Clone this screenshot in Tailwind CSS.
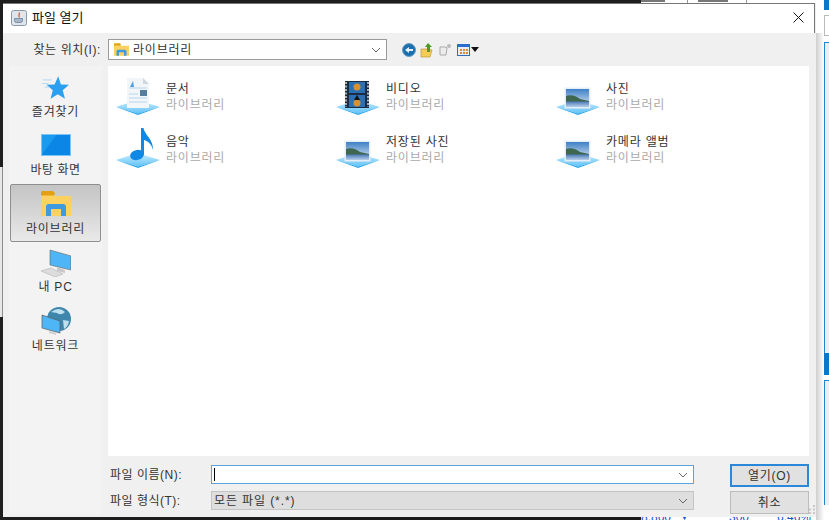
<!DOCTYPE html>
<html><head><meta charset="utf-8"><script src="https://cdn.jsdelivr.net/npm/@tailwindcss/browser@4"></script></head>
<body class="bg-white overflow-hidden">
<svg width="0" height="0" class="absolute">
<defs>
<linearGradient id="pl" x1="0" y1="0" x2="0" y2="1"><stop offset="0" stop-color="#cdeefd"/><stop offset="1" stop-color="#62c3f7"/></linearGradient>
<linearGradient id="sky" x1="0" y1="0" x2="0" y2="1"><stop offset="0" stop-color="#3f80c6"/><stop offset="1" stop-color="#dfeaf2"/></linearGradient>
<linearGradient id="water" x1="0" y1="0" x2="0" y2="1"><stop offset="0" stop-color="#4a79b8"/><stop offset="1" stop-color="#b7cfe8"/></linearGradient>
<symbol id="plate" viewBox="0 0 44 40" overflow="visible"><path d="M21 25 44 32 22 38.500 0 32Z" fill="url(#pl)"/><path d="M0 32 22 38.500 44 32 22 40Z" fill="#2aa5ef"/></symbol>
<symbol id="photo" viewBox="0 0 44 40"><use href="#plate" width="44" height="40"/><rect x="8.500" y="12.500" width="26" height="21" fill="#e4eef7"/><rect x="10" y="14" width="23" height="18" fill="url(#sky)"/><path d="M10 21C15 19 20 21 24 24L33 26V28H10Z" fill="#3f664f"/><rect x="10" y="26.500" width="23" height="5.500" fill="url(#water)"/></symbol>
<symbol id="folder" viewBox="0 0 30 25"><path d="M0 3h11l3 2h16v20H0Z" fill="#fbd25f"/><path d="M1 0h11l2 2.500-1 2H0V1Z" fill="#e2a20f"/><path d="M5 25V16q0-3 3-3h14q3 0 3 3v9h-5v-7H10v7Z" fill="#3f9adf"/></symbol>
</defs>
</svg>
<div class="relative w-[829px] h-[520px] overflow-hidden bg-[#1e1e1e] font-['Liberation_Sans','Noto_Sans_CJK_KR',sans-serif]">
  <!-- background peeking around the dialog -->
  <div class="absolute left-[641px] top-0 w-[188px] h-[3px] bg-white flex">
    <div class="w-[24px] h-[2px] bg-[#777]"></div><div class="ml-[22px] w-px h-[3px] bg-[#999]"></div><div class="ml-[10px] w-[30px] h-[2px] bg-[#777]"></div><div class="ml-[18px] w-px h-[3px] bg-[#999]"></div>
  </div>
  <div class="absolute left-[816px] top-0 w-[13px] h-[520px] bg-white flex">
    <div class="w-[8px] h-full bg-linear-to-r from-[#cfcfcf] to-white mt-[33px]"></div>
    <div class="w-[5px] h-full flex flex-col">
      <div class="h-[10px] bg-[#0a78c8]"></div>
      <div class="mt-[5px] h-[21px] border border-[#bbb] border-r-0"></div>
      <div class="mt-[6px] h-[311px] border-l border-t border-[#1f86d0] bg-[#e8eff6]"></div>
      <div class="h-[22px] bg-[#0a78c8]"></div>
      <div class="mt-[5px] h-[125px] border-l border-t border-[#1f86d0] bg-[#e8eff6]"></div>
    </div>
  </div>
  <div class="absolute left-[641px] top-[511px] w-[175px] h-[9px] bg-white overflow-hidden flex text-[12px] leading-[13px] text-[#1750c8]">
    <span>8.860</span><span class="ml-[9px] text-[9px]">▼</span><span class="ml-[40px]">300</span><span class="ml-[28px]">6.46%</span>
  </div>
  <div class="absolute left-0 top-[167px] w-[3px] h-[150px] bg-[#e6e6e6] border-r border-[#8a8a8a]"></div>

  <div class="absolute left-[3px] top-[3px] w-[813px] h-[514px] flex flex-col bg-[#f0f0f0] text-[#2a2a2a]">
    <div class="h-[30px] shrink-0 bg-white mr-[1px] flex items-center pl-[8px] pr-[10px] border-r border-t border-[#777] text-[13px] text-[#111]">
      <svg class="mb-[2px]" width="16" height="16" viewBox="0 0 16 16"><rect x=".5" y=".5" width="15" height="15" rx="2" fill="#dfe5ec" stroke="#8b98a8"/><path d="M8 2.500C9.500 4.500 6.500 5 8.500 7.500" fill="none" stroke="#c8552a" stroke-width="1.200"/><path d="M3.500 8.500h8v2q0 2-2 2h-4q-2 0-2-2Z" fill="#a9b7c8" stroke="#5c7894" stroke-width=".7"/></svg>
      <span class="ml-[5px] mb-[2px]">파일 열기</span>
      <svg class="ml-auto mb-[2px]" width="11" height="11" viewBox="0 0 11 11"><path d="M.5.5l10 10M10.500.5l-10 10" stroke="#111" stroke-width="1"/></svg>
    </div>
    <div class="flex-1 flex flex-col min-h-0">
      <div class="h-[33px] shrink-0 flex items-center">
        <span class="w-[105px] pr-[7px] text-right text-[12px] tracking-[0.6px] whitespace-nowrap text-[#333]">찾는 위치(I):</span>
        <div class="w-[279px] h-[21px] bg-white border border-[#9a9a9a] flex items-center pl-[5px] pr-[5px] text-[12px]">
          <svg width="15" height="13"><use href="#folder" width="15" height="13"/></svg>
          <span class="ml-[4px] tracking-[0.8px] text-[#333]">라이브러리</span>
          <svg class="ml-auto" width="10" height="6" viewBox="0 0 10 6"><path d="M1 1l4 4 4-4" fill="none" stroke="#666"/></svg>
        </div>
        <div class="ml-[15px] flex items-center">
          <svg width="14" height="14" viewBox="0 0 14 14"><circle cx="7" cy="7" r="6.500" fill="#1c6fae"/><circle cx="7" cy="7" r="6.500" fill="none" stroke="#6a9cc0"/><path d="M3 7l4-3v2h4v2H7v2Z" fill="#e8f2fa"/></svg>
          <svg class="ml-[4px]" width="13" height="16" viewBox="0 0 13 16"><path d="M1 7h5l6 1-2 7H1Z" fill="#f3cd55" stroke="#b98e22" stroke-width=".6"/><path d="M8 1l4 4H10v5H7V5H5Z" fill="#4c9a28"/></svg>
          <svg class="ml-[6px]" width="13" height="13" viewBox="0 0 13 13"><path d="M1 4h6l1 1-1 7H1Z" fill="#ececec" stroke="#aaa"/><circle cx="10" cy="3" r="2" fill="#bbb"/></svg>
          <svg class="ml-[5px]" width="14" height="12" viewBox="0 0 14 12"><rect x=".5" y=".5" width="12" height="11" fill="#e8eef5" stroke="#2c6fc2"/><rect x="1" y="1" width="11" height="2" fill="#2c6fc2"/><path d="M3 5h2v2H3Zm3 0h2v2H6Zm3 0h2v2H9ZM3 8h2v2H3Zm3 0h2v2H6Zm3 0h2v2H9Z" fill="#d88c3a"/></svg>
          <svg width="8" height="5" viewBox="0 0 8 5"><path d="M0 0h8L4 5Z" fill="#111"/></svg>
        </div>
      </div>
      <div class="flex-1 flex min-h-0 pl-[6px]">
        <div class="w-[93px] shrink-0 bg-[#f3f3f3] flex flex-col items-stretch text-[12px] text-center text-[#333] mb-[3px] pl-[1px] pr-[1px] pt-[2px]">
          <div class="h-[58px] flex flex-col items-center">
            <div class="h-[37px] pt-[8px]"><svg width="27" height="24" viewBox="0 0 30 26"><path d="M18 0l3 9 9 .5-7 6 2.500 9.500-8-5-8 5 2.500-9.500-7-6 9-.5Z" fill="#2b9ff0"/><path d="M1 4h10M0 8h7M3 12h5" stroke="#a9d8f8"/></svg></div>
            <span class="tracking-[0.8px] leading-[14px]">즐겨찾기</span>
          </div>
          <div class="h-[58px] flex flex-col items-center">
            <div class="h-[37px] pt-[8px]"><svg width="30" height="22" viewBox="0 0 30 22"><rect width="30" height="22" fill="#1a9bf0"/><path d="M0 22 16 0h14v22Z" fill="#0c86e6"/><rect x=".5" y=".5" width="29" height="21" fill="none" stroke="#7cc4f5"/></svg></div>
            <span class="tracking-[0.5px] leading-[14px]">바탕 화면</span>
          </div>
          <div class="h-[58px] flex flex-col items-center border border-[#8f8f8f] rounded-[2px] bg-linear-to-b from-[#c4c4c4] to-[#e9e9e9]">
            <div class="h-[37px] pt-[6px]"><svg width="30" height="25"><use href="#folder" width="30" height="25"/></svg></div>
            <span class="tracking-[0.8px] leading-[14px]">라이브러리</span>
          </div>
          <div class="h-[58px] flex flex-col items-center">
            <div class="h-[38px] pt-[7px]"><svg width="30" height="28" viewBox="0 0 30 28"><path d="M9 1l21 6v14L9 16Z" fill="#4eb6f7" stroke="#666" stroke-width=".6"/><path d="M16 18l8 3v3l-8-2Z" fill="#c9c9c9"/><path d="M0 22l10-3 12 6-8 3Z" fill="#dcdcdc" stroke="#aaa" stroke-width=".5"/></svg></div>
            <span class="tracking-[0.8px] leading-[14px]">내 PC</span>
          </div>
          <div class="h-[58px] flex flex-col items-center">
            <div class="h-[39px] pt-[6px]"><svg width="30" height="30" viewBox="0 0 30 30"><circle cx="18" cy="13" r="12" fill="#3f86ad"/><path d="M10 6q8-6 14 0-4 4-8 1ZM22 14l6 1q-1 6-5 8Z" fill="#bfe0ef"/><path d="M1 9l18 6v12L1 22Z" fill="#4eb6f7" stroke="#5a5a5a" stroke-width=".7"/><path d="M8 25l7 2v2l-7-2Z" fill="#cfcfcf"/></svg></div>
            <span class="tracking-[0.8px] leading-[14px]">네트워크</span>
          </div>
        </div>
        <div class="w-[701px] ml-[6px] flex flex-col">
          <div class="h-[390px] bg-white grid grid-cols-[220px_220px_220px] auto-rows-[53px] pt-[9px] pl-[8px] content-start text-[12px]">
            <div class="flex"><svg width="44" height="40" viewBox="0 0 44 40"><use href="#plate" width="44" height="40"/><path d="M11 3h16l6 6v24H11Z" fill="#f3f6f9"/><path d="M27 3l6 6h-6Z" fill="#cfd8e2"/><path d="M14 12l3-6 1 6Z" fill="#4d9fe0"/><path d="M13 13h18M13 19h9M13 23h18M13 27h18" stroke="#b5d6ef"/><rect x="24" y="15" width="7" height="6" fill="#557d9c"/></svg><div class="ml-[6px] mt-[6px] leading-[16px] tracking-[0.8px]"><div class="text-[#333]">문서</div><div class="text-[#a9a9a9]">라이브러리</div></div></div>
            <div class="flex"><svg width="44" height="40" viewBox="0 0 44 40"><use href="#plate" width="44" height="40"/><rect x="9" y="6" width="24" height="27" fill="#1c2c44"/><path d="M10 7v25M32 7v25" stroke="#a6b0ba" stroke-width="2" stroke-dasharray="2 1.500"/><rect x="13" y="7" width="16" height="11" fill="#2b6fb5"/><rect x="13" y="20" width="16" height="12" fill="#2b6fb5"/><circle cx="21" cy="12" r="3.500" fill="#d9912d"/><circle cx="21" cy="28" r="3.500" fill="#d9912d"/><path d="M21 20l3 5h-6Z" fill="#111"/></svg><div class="ml-[6px] mt-[6px] leading-[16px] tracking-[0.8px]"><div class="text-[#333]">비디오</div><div class="text-[#a9a9a9]">라이브러리</div></div></div>
            <div class="flex"><svg width="44" height="40"><use href="#photo" width="44" height="40"/></svg><div class="ml-[6px] mt-[6px] leading-[16px] tracking-[0.8px]"><div class="text-[#333]">사진</div><div class="text-[#a9a9a9]">라이브러리</div></div></div>
            <div class="flex"><svg width="44" height="40" viewBox="0 0 44 40"><use href="#plate" width="44" height="40"/><ellipse cx="21" cy="27" rx="7" ry="5" fill="#1088e6" transform="rotate(-15 21 27)"/><path d="M25 27V0h2.500c1 7 10 11 9.500 22-1.500-6-5-9-9-10v15Z" fill="#1088e6"/></svg><div class="ml-[6px] mt-[6px] leading-[16px] tracking-[0.8px]"><div class="text-[#333]">음악</div><div class="text-[#a9a9a9]">라이브러리</div></div></div>
            <div class="flex"><svg width="44" height="40"><use href="#photo" width="44" height="40"/></svg><div class="ml-[6px] mt-[6px] leading-[16px] tracking-[0.8px]"><div class="text-[#333]">저장된 사진</div><div class="text-[#a9a9a9]">라이브러리</div></div></div>
            <div class="flex"><svg width="44" height="40"><use href="#photo" width="44" height="40"/></svg><div class="ml-[6px] mt-[6px] leading-[16px] tracking-[0.8px]"><div class="text-[#333]">카메라 앨범</div><div class="text-[#a9a9a9]">라이브러리</div></div></div>
          </div>
          <div class="flex-1 flex pt-[8px] text-[12px] text-[#333]">
            <div class="flex flex-col w-[586px] pt-[1px]">
              <div class="flex items-center h-[19px]">
                <span class="w-[103px] pl-[2px] tracking-[0.5px]">파일 이름(N):</span>
                <div class="flex-1 h-[19px] bg-white border border-[#5aa3dc] flex items-center pl-[2px] pr-[5px]"><span class="w-px h-[13px] bg-black"></span><svg class="ml-auto" width="10" height="6" viewBox="0 0 10 6"><path d="M1 1l4 4 4-4" fill="none" stroke="#666"/></svg></div>
              </div>
              <div class="flex items-center h-[19px] mt-[7px]">
                <span class="w-[103px] pl-[2px] tracking-[0.5px]">파일 형식(T):</span>
                <div class="flex-1 h-[19px] bg-[#dedede] border border-[#c4c4c4] flex items-center pl-[2px] pr-[5px] tracking-[0.9px]">모든 파일 (*.*)<svg class="ml-auto" width="10" height="6" viewBox="0 0 10 6"><path d="M1 1l4 4 4-4" fill="none" stroke="#666"/></svg></div>
              </div>
            </div>
            <div class="flex flex-col ml-[36px] w-[79px]">
              <div class="h-[23px] border-2 border-[#2b88d8] bg-[#e1e1e1] flex items-center justify-center tracking-[0.7px]">열기(O)</div>
              <div class="h-[23px] mt-[4px] border border-[#bcbcbc] bg-[#e1e1e1] flex items-center justify-center tracking-[0.7px]">취소</div>
            </div>
          </div>
        </div>
      </div>
    </div>
    <svg class="absolute right-[1px] bottom-[3px]" width="6" height="9" viewBox="0 0 6 9"><path d="M4 0h2v2H4ZM4 3.500h2v2H4ZM4 7h2v2H4ZM0 3.500h2v2H0ZM0 7h2v2H0Z" fill="#c9c9c9"/></svg>
  </div>
</div>
</body></html>
